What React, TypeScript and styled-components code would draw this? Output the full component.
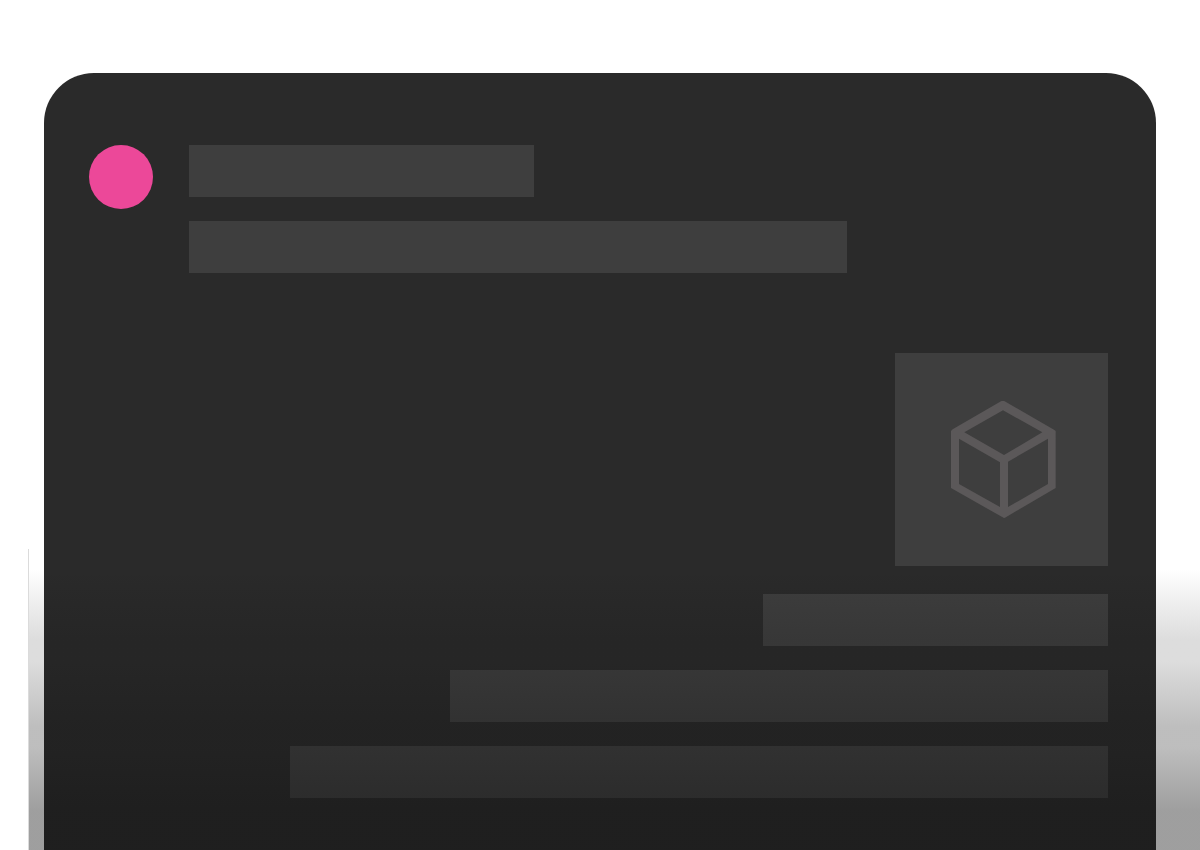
import React from "react";
import styled, { createGlobalStyle } from "styled-components";

const GlobalStyle = createGlobalStyle`
  * {
    box-sizing: border-box;
  }

  body {
    margin: 0;
    background: #ffffff;
    font-family: "Liberation Sans", sans-serif;
  }
`;

const Page = styled.main`
  position: relative;
  display: flex;
  flex-direction: column;
  min-height: 100vh;
  padding: 73px 44px 0;
`;

const Card = styled.section`
  display: flex;
  flex: 1;
  flex-direction: column;
  gap: 80px;
  padding: 72px 48px 52px 45px;
  border-radius: 50px 50px 0 0;
  background: #2a2a2a;
`;

const Incoming = styled.article`
  display: flex;
  align-items: flex-start;
  gap: 36px;
`;

const Avatar = styled.div`
  flex: none;
  width: 64px;
  height: 64px;
  border-radius: 50%;
  background: #ec4899;
`;

const Lines = styled.div<{ $end?: boolean }>`
  display: flex;
  flex: 1;
  flex-direction: column;
  align-items: ${({ $end }) => ($end ? "flex-end" : "flex-start")};
  gap: 24px;
  min-width: 0;
`;

const Line = styled.div<{ $width: number }>`
  width: ${({ $width }) => $width}px;
  max-width: 100%;
  height: 52px;
  background: #3e3e3e;
`;

const Outgoing = styled.article`
  display: flex;
  flex-direction: column;
  gap: 28px;
`;

const Tile = styled.figure`
  display: flex;
  align-items: center;
  justify-content: center;
  align-self: flex-end;
  width: 213px;
  height: 213px;
  margin: 0;
  background: #3e3e3e;
`;

const CubeIcon = styled.svg`
  display: block;
  width: 109px;
  height: 117px;
  fill: #5b5859;
`;

/* Shadow that rises from the bottom edge in three soft steps. */
const Fade = styled.div`
  position: absolute;
  right: 0;
  bottom: 0;
  left: 28px;
  height: 301px;
  border-left: 1px solid #dbdbdb;
  background: linear-gradient(
    rgba(14, 14, 14, 0) 20px,
    rgba(14, 14, 14, 0.14) 90px,
    rgba(14, 14, 14, 0.14) 112px,
    rgba(14, 14, 14, 0.27) 178px,
    rgba(14, 14, 14, 0.27) 198px,
    rgba(14, 14, 14, 0.4) 262px
  );
  background-clip: padding-box;
  pointer-events: none;
`;

export default function App() {
  return (
    <>
      <GlobalStyle />
      <Page>
        <Card>
          <Incoming>
            <Avatar />
            <Lines>
              <Line $width={345} />
              <Line $width={658} />
            </Lines>
          </Incoming>
          <Outgoing>
            <Tile>
              <CubeIcon viewBox="51 48 327 351" aria-hidden="true">
                <path
                  fillRule="evenodd"
                  d="M213 49L218 47L224 49L372 134L377 138V309L225 398L222 399L218 397L63 309V138L68 133Z
                     M219 76L103 142L222 210L337 142Z
                     M87 161V297L210 366V232Z
                     M354 161L234 230V366L354 297Z"
                />
              </CubeIcon>
            </Tile>
            <Lines $end>
              <Line $width={345} />
              <Line $width={658} />
              <Line $width={818} />
            </Lines>
          </Outgoing>
        </Card>
        <Fade />
      </Page>
    </>
  );
}
